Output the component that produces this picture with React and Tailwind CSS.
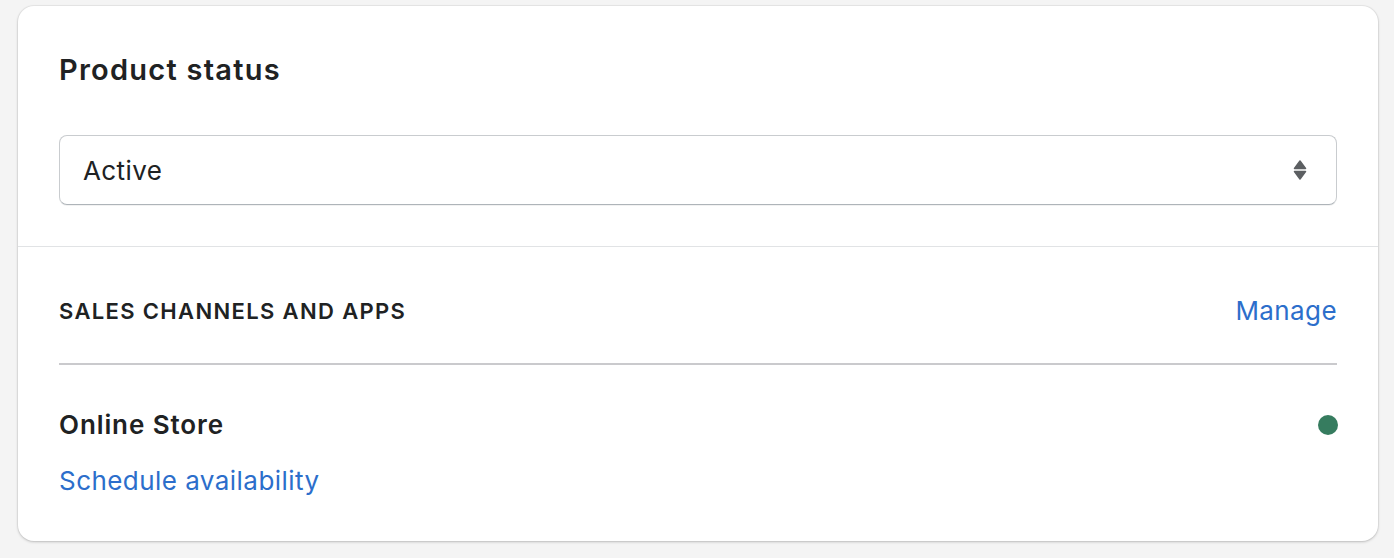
export default function App() {
  return (
    <div className="min-h-[558px] bg-[#f4f4f4] pt-[6px] pl-[18px] pr-[16px] font-['Inter','Noto_Sans',sans-serif]">
      <div className="w-[1360px] bg-white rounded-[16px] shadow-[0_1px_3px_rgba(0,0,0,0.2),0_0_0_1px_rgba(63,63,68,0.05)]">
        {/* Status */}
        <div className="px-[41px] pt-[46px] pb-[41px] border-b border-[#e1e3e5]">
          <h2 className="text-[29px] leading-[36px] font-semibold tracking-[1.25px] text-[#202223] mb-[47px]">Product status</h2>
          <div className="h-[70px] flex items-center justify-between pl-[23px] pr-[24px] rounded-[8px] border border-[#c9cccf] border-b-[#aeb4b9] shadow-[0_1px_0_rgba(0,0,0,0.05)]">
            <span className="text-[26px] tracking-[0.4px] text-[#202223]">Active</span>
            <svg width="14" height="20" viewBox="0 0 14 20" className="mr-[5px]">
              <path d="M7 1 L12.5 8.5 H1.5 Z" fill="#5c5f62" strokeLinejoin="round" stroke="#5c5f62" strokeWidth="1.5" />
              <path d="M7 19 L12.5 11.5 H1.5 Z" fill="#5c5f62" strokeLinejoin="round" stroke="#5c5f62" strokeWidth="1.5" />
            </svg>
          </div>
        </div>

        {/* Channels */}
        <div className="px-[41px] pt-[46px] pb-[42px]">
          <div className="flex items-center justify-between pb-[34px] border-b-2 border-[#cacacd]">
            <h3 className="text-[22px] leading-[36px] font-semibold tracking-[1.35px] text-[#202223] uppercase">Sales channels and apps</h3>
            <a className="text-[26px] leading-[36px] tracking-[0.4px] text-[#2c6ecb]">Manage</a>
          </div>
          <div className="pt-[42px] flex items-center justify-between">
            <span className="text-[26px] leading-[36px] font-semibold tracking-[0.9px] text-[#202223]">Online Store</span>
            <span className="w-[20px] h-[20px] mr-[-1px] rounded-full bg-[#367c5f]" />
          </div>
          <a className="block mt-[20px] text-[26px] leading-[36px] tracking-[0.45px] text-[#2c6ecb]">Schedule availability</a>
        </div>
      </div>
    </div>
  );
}
